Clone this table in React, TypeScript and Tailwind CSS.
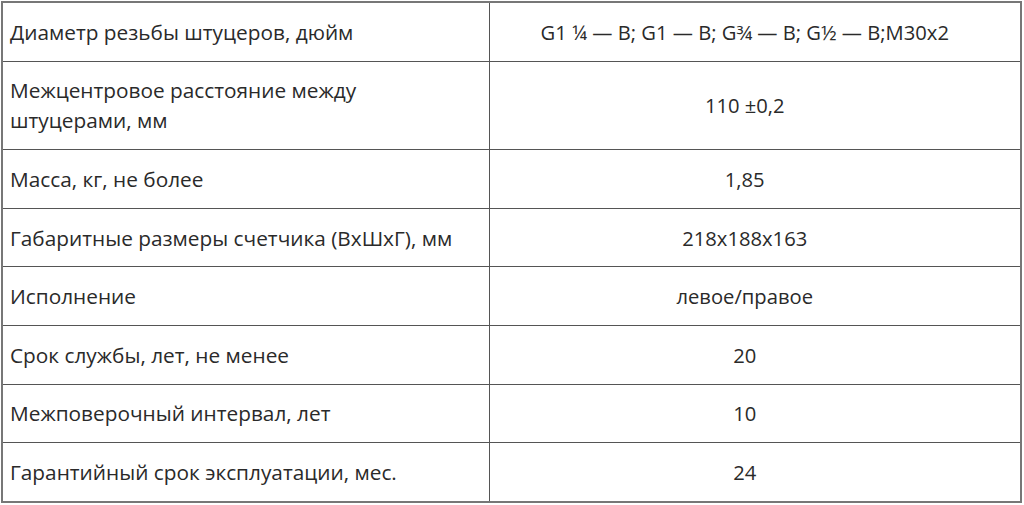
const rows: [string, string][] = [
  ["Диаметр резьбы штуцеров, дюйм", "G1 ¼ — B; G1 — B; G¾ — B; G½ — B;M30x2"],
  ["Межцентровое расстояние между штуцерами, мм", "110 ±0,2"],
  ["Масса, кг, не более", "1,85"],
  ["Габаритные размеры счетчика (ВхШхГ), мм", "218x188x163"],
  ["Исполнение", "левое/правое"],
  ["Срок службы, лет, не менее", "20"],
  ["Межповерочный интервал, лет", "10"],
  ["Гарантийный срок эксплуатации, мес.", "24"],
];

export default function App() {
  return (
    <div className="bg-white px-[1px] pt-[1px] font-['Open_Sans',sans-serif] text-[20.8px] leading-[30px] text-[#2a2a2a]">
      <table className="w-[1021px] table-fixed border-collapse border-2 border-[#777]">
        <colgroup>
          <col className="w-[487px]" />
          <col />
        </colgroup>
        <tbody>
          {rows.map(([k, v]) => (
            <tr key={k}>
              <td className="border border-[#555] py-[13.8px] pl-[7px] pr-[10px] align-middle">{k}</td>
              <td className="border border-[#555] py-[13.8px] pr-[20px] text-center align-middle">
                <span className="text-[20.2px]">{v}</span>
              </td>
            </tr>
          ))}
        </tbody>
      </table>
    </div>
  );
}
